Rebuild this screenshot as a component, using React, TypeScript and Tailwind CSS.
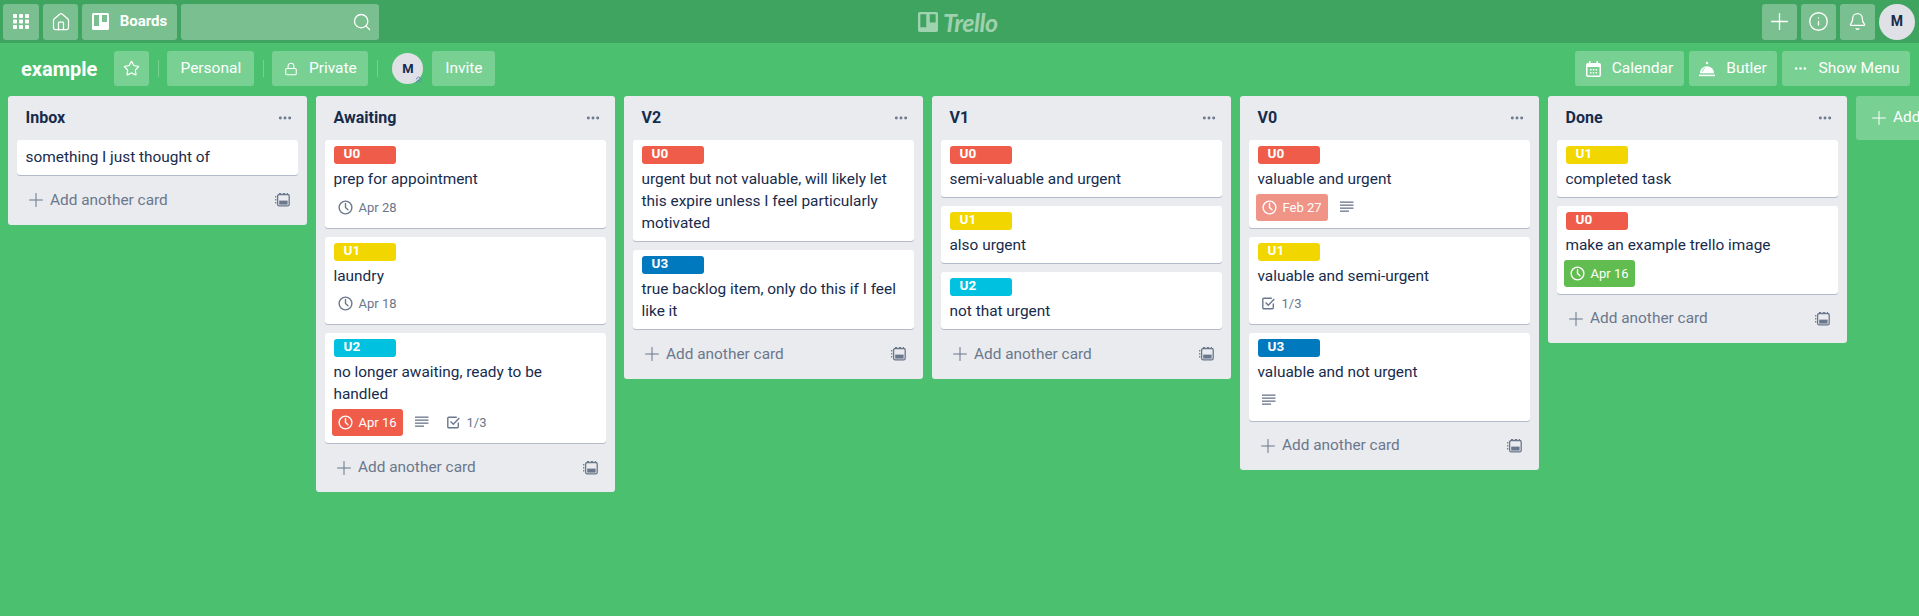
import React from 'react';
import { Bell, ChevronsUp, Ellipsis, Home, Info, Lock, Plus, Search, Star } from 'lucide-react';

type Label = 'U0' | 'U1' | 'U2' | 'U3';

interface CardData {
  label?: Label;
  text: string;
  date?: string;
  dateTone?: 'plain' | 'overdue' | 'past' | 'done';
  desc?: boolean;
  check?: string;
}

interface ListData {
  title: string;
  cards: CardData[];
}

const labelClass: Record<Label, string> = {
  U0: 'bg-[#ef5d4a]',
  U1: 'bg-[#f2d600]',
  U2: 'bg-[#00c2e0]',
  U3: 'bg-[#0079bf]',
};

const dateClass = {
  plain: 'text-[#6b778c]',
  overdue: 'bg-[#ef5d4a] text-white rounded-[3px]',
  past: 'bg-[#f09488] text-white rounded-[3px]',
  done: 'bg-[#61bd4f] text-white rounded-[3px]',
};

const lists: ListData[] = [
  { title: 'Inbox', cards: [{ text: 'something I just thought of' }] },
  {
    title: 'Awaiting',
    cards: [
      { label: 'U0', text: 'prep for appointment', date: 'Apr 28', dateTone: 'plain' },
      { label: 'U1', text: 'laundry', date: 'Apr 18', dateTone: 'plain' },
      { label: 'U2', text: 'no longer awaiting, ready to be handled', date: 'Apr 16', dateTone: 'overdue', desc: true, check: '1/3' },
    ],
  },
  {
    title: 'V2',
    cards: [
      { label: 'U0', text: 'urgent but not valuable, will likely let this expire unless I feel particularly motivated' },
      { label: 'U3', text: 'true backlog item, only do this if I feel like it' },
    ],
  },
  {
    title: 'V1',
    cards: [
      { label: 'U0', text: 'semi-valuable and urgent' },
      { label: 'U1', text: 'also urgent' },
      { label: 'U2', text: 'not that urgent' },
    ],
  },
  {
    title: 'V0',
    cards: [
      { label: 'U0', text: 'valuable and urgent', date: 'Feb 27', dateTone: 'past', desc: true },
      { label: 'U1', text: 'valuable and semi-urgent', check: '1/3' },
      { label: 'U3', text: 'valuable and not urgent', desc: true },
    ],
  },
  {
    title: 'Done',
    cards: [
      { label: 'U1', text: 'completed task' },
      { label: 'U0', text: 'make an example trello image', date: 'Apr 16', dateTone: 'done' },
    ],
  },
];

const ClockIcon = () => (
  <svg width="15" height="15" viewBox="0 0 16 16" fill="none" stroke="currentColor" strokeWidth="1.500" strokeLinecap="round" className="shrink-0">
    <circle cx="8" cy="8" r="6.800" />
    <path d="M8 3.800V8l2.600 2.400" />
  </svg>
);

const DescIcon = () => (
  <svg width="14" height="12" viewBox="0 0 14 12" fill="#6b778c" className="shrink-0">
    <rect x="0" y="0.500" width="13.500" height="1.300" />
    <rect x="0" y="3.500" width="13.500" height="1.300" />
    <rect x="0" y="6.500" width="13.500" height="1.300" />
    <rect x="0" y="9.500" width="9" height="1.300" />
  </svg>
);

const CheckIcon = () => (
  <svg width="13" height="13" viewBox="0 0 13 13" fill="none" stroke="#6b778c" strokeWidth="1.400" className="shrink-0">
    <path d="M11.300 6.600v4.200a1 1 0 0 1-1 1H1.800a1 1 0 0 1-1-1V2.300a1 1 0 0 1 1-1h8" />
    <path d="M3.600 5.600l2.700 2.700 6-6.200" />
  </svg>
);

const TemplateIcon = () => (
  <svg width="15" height="14" viewBox="0 0 15 14" className="shrink-0">
    <rect x="2.600" y="1.500" width="11.600" height="11.300" rx="1.600" fill="none" stroke="#6b778c" strokeWidth="1.300" />
    <rect x="4.200" y="7.600" width="8.400" height="4" fill="#6b778c" />
    <path d="M0.700 3v1.400M0.700 6v1.400M0.700 9v1.400M4 0.500h2M8 0.500h2M12 0.500h1" stroke="#6b778c" strokeWidth="1.200" />
  </svg>
);

const BoardsGlyph = ({ size = 17 }: { size?: number }) => (
  <svg width={size} height={size} viewBox="0 0 17 17" fill="currentColor" className="shrink-0">
    <path fillRule="evenodd" d="M1.500 0h14A1.500 1.500 0 0 1 17 1.500v14a1.500 1.500 0 0 1-1.500 1.500h-14A1.500 1.500 0 0 1 0 15.500v-14A1.500 1.500 0 0 1 1.500 0zM2 2v11h5V2H2zm8 0v7h5V2h-5z" />
  </svg>
);

const AppsIcon = () => (
  <svg width="16" height="15" viewBox="0 0 16 15" fill="white">
    {[0, 5.5, 11].map((y) =>
      [0, 6, 12].map((x) => <rect key={`${x}-${y}`} x={x} y={y} width="4" height="4" rx="0.800" />),
    )}
  </svg>
);

const CalendarIcon = () => (
  <svg width="15" height="16" viewBox="0 0 15 16" fill="white" className="shrink-0">
    <path fillRule="evenodd" d="M3 0h1.500v2h6V0H12v2h1a2 2 0 0 1 2 2v10a2 2 0 0 1-2 2H2a2 2 0 0 1-2-2V4a2 2 0 0 1 2-2h1V0zM1.500 6v8a.5.5 0 0 0 .5.5h11a.5.5 0 0 0 .5-.5V6h-12z" />
    <path d="M4 8h1.500v1.500H4zM6.800 8h1.500v1.500H6.800zM9.600 8h1.500v1.500H9.600zM4 11h1.500v1.500H4zM6.800 11h1.500v1.500H6.800zM9.600 11h1.500v1.500H9.600z" />
  </svg>
);

const ButlerIcon = () => (
  <svg width="16" height="16" viewBox="0 0 16 16" fill="white" className="shrink-0">
    <circle cx="8" cy="2" r="1.200" />
    <path d="M1 12.300a7 7 0 0 1 14 0z" />
    <rect x="0" y="13.600" width="16" height="1.600" />
    <path d="M3.400 10.500a4.800 4.800 0 0 1 2.600-3.600" fill="none" stroke="#78cf93" strokeWidth="0.800" />
  </svg>
);

const TopButton = ({ className, children }: { className: string; children: React.ReactNode }) => (
  <div className={`h-9 rounded-[3px] bg-white/30 flex items-center justify-center text-white ${className}`}>
    {children}
  </div>
);

const BarButton = ({ className, children }: { className: string; children: React.ReactNode }) => (
  <div className={`h-[35px] rounded-[3px] bg-white/25 flex items-center justify-center gap-[11px] text-white text-[15.500px] ${className}`}>
    {children}
  </div>
);

const Divider = () => <div className="w-px h-[17px] mx-[8.500px] bg-white/25" />;

const Card = ({ card }: { card: CardData }) => {
  const hasMeta = card.date || card.desc || card.check;
  return (
    <div className="bg-white rounded-[3px] shadow-[0_1px_0_#b5bacb] px-[8.500px] pt-1.5 pb-[7px]">
      {card.label && (
        <div className={`w-[62px] h-[18px] rounded-[3px] mb-1 px-2.5 text-white text-[13.500px] font-bold leading-[15px] ${labelClass[card.label]}`}>
          {card.label}
        </div>
      )}
      <div className="text-[#172b4d] text-[15.400px] leading-[22px]">{card.text}</div>
      {hasMeta && (
        <div className="flex items-center h-[26.500px] mt-1 -ml-0.5 text-[13px]">
          {card.date && (
            <div className={`h-[26.500px] flex items-center gap-1.5 px-1.5 mr-1.5 ${dateClass[card.dateTone ?? 'plain']}`}>
              <ClockIcon />
              <span>{card.date}</span>
            </div>
          )}
          {card.desc && (
            <div className="px-1.5 mr-1.5 flex items-center">
              <DescIcon />
            </div>
          )}
          {card.check && (
            <div className="px-1.5 flex items-center gap-[7px] text-[#6b778c]">
              <CheckIcon />
              <span>{card.check}</span>
            </div>
          )}
        </div>
      )}
    </div>
  );
};

const List = ({ list }: { list: ListData }) => (
  <div className="w-[299px] shrink-0 bg-[#e9ebef] rounded-[3px] px-[9px]">
    <div className="h-11 flex items-center justify-between pl-[8.500px] pr-[5px]">
      <div className="text-[#172b4d] text-[16px] font-bold">{list.title}</div>
      <Ellipsis size={16} strokeWidth={2.400} className="text-[#6b778c]" />
    </div>
    <div className="flex flex-col gap-[9px]">
      {list.cards.map((card) => (
        <Card key={card.text} card={card} />
      ))}
    </div>
    <div className="h-[49.500px] pt-px flex items-center justify-between pl-[8px] pr-2 text-[#6b778c] text-[15.400px]">
      <div className="flex items-center gap-[3px]">
        <Plus size={22} strokeWidth={1.100} />
        <span>Add another card</span>
      </div>
      <TemplateIcon />
    </div>
  </div>
);

export default function App() {
  return (
    <div className="relative w-screen h-screen overflow-hidden bg-[#4bc06f] font-['Roboto',sans-serif]">
      {/* top bar */}
      <div className="h-[43px] bg-[#3fa45f] flex items-center justify-between pl-[3px] pr-1">
        <div className="flex items-center gap-1">
          <TopButton className="w-9"><AppsIcon /></TopButton>
          <TopButton className="w-[35px]"><Home size={20} strokeWidth={1.500} /></TopButton>
          <TopButton className="w-[95px]">
            <BoardsGlyph />
            <span className="ml-[11px] text-[15px] font-bold">Boards</span>
          </TopButton>
          <div className="w-[198px] h-9 rounded-[3px] bg-white/30 flex items-center justify-end pr-[7px] text-white">
            <Search size={20} strokeWidth={1.600} />
          </div>
        </div>
        <div className="absolute left-[918px] top-[11px] h-[22px] flex items-center gap-[5px] text-white/50">
          <BoardsGlyph size={20} />
          <span className="font-['Lato',sans-serif] italic font-bold text-[25px] leading-[22px] tracking-[-0.5px]">Trello</span>
        </div>
        <div className="flex items-center gap-1">
          <TopButton className="w-[35px]"><Plus size={27} strokeWidth={1.200} /></TopButton>
          <TopButton className="w-[35px]"><Info size={21} strokeWidth={1.500} /></TopButton>
          <TopButton className="w-[35px]"><Bell size={19} strokeWidth={1.600} /></TopButton>
          <div className="w-9 h-9 rounded-full bg-[#dfe1e6] flex items-center justify-center text-[#172b4d] text-[14px] font-bold">
            M
          </div>
        </div>
      </div>

      {/* board bar */}
      <div className="h-[53px] flex items-center justify-between pl-[21px] pr-[9px] pb-[2px]">
        <div className="flex items-center">
          <div className="text-white text-[20px] font-bold mr-[17px]">example</div>
          <BarButton className="w-[35px]"><Star size={17} strokeWidth={1.700} /></BarButton>
          <Divider />
          <BarButton className="w-[87px]">Personal</BarButton>
          <Divider />
          <BarButton className="w-24"><Lock size={14} strokeWidth={1.800} />Private</BarButton>
          <Divider />
          <div className="relative w-[31px] h-[31px] ml-[6px] mr-[9px] rounded-full bg-[#dfe1e6] flex items-center justify-center text-[#172b4d] text-[13px] font-bold">
            M
            <ChevronsUp size={11} strokeWidth={2} className="absolute -right-px -bottom-px text-[#5e6cc4]" />
          </div>
          <BarButton className="w-[63px]">Invite</BarButton>
        </div>
        <div className="flex items-center gap-[5px]">
          <BarButton className="w-[109px]"><CalendarIcon />Calendar</BarButton>
          <BarButton className="w-[88px]"><ButlerIcon />Butler</BarButton>
          <BarButton className="w-[128px]"><Ellipsis size={15} strokeWidth={2.200} />Show Menu</BarButton>
        </div>
      </div>

      {/* lists */}
      <div className="flex items-start gap-[9px] pl-2 overflow-hidden">
        {lists.map((list) => (
          <List key={list.title} list={list} />
        ))}
        <div className="w-[299px] shrink-0 h-11 rounded-[3px] bg-white/25 flex items-center gap-[3px] pl-[12px] text-white text-[15.400px]">
          <Plus size={22} strokeWidth={1.100} />
          <span>Add another list</span>
        </div>
      </div>
    </div>
  );
}
